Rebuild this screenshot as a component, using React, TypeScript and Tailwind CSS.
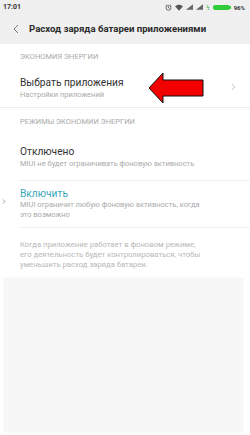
import React from "react"

const font = { fontFamily: "Roboto, 'Noto Sans', sans-serif" }

function StatusBar() {
  return (
    <div className="flex h-[14px] items-center justify-between bg-[#efefef] pl-[3px] pr-[5px]">
      <span className="text-[7px] font-bold text-[#333]">17:01</span>
      <div className="flex items-center gap-[3px] text-[#444]">
        {/* alarm */}
        <svg width="7" height="7" viewBox="0 0 10 10" fill="none" stroke="#555" strokeWidth="1.2">
          <circle cx="5" cy="5.5" r="3.5" />
          <path d="M5 3.5V5.6L6.3 6.4M1 2.2L2.4 1M9 2.2L7.6 1" />
        </svg>
        {/* wifi */}
        <svg width="8" height="7" viewBox="0 0 12 10" fill="#555">
          <path d="M6 10L0 3.2C3.5 0 8.5 0 12 3.2Z" />
        </svg>
        <svg width="7" height="6" viewBox="0 0 10 8" fill="#666">
          <path d="M10 0V8H0Z" />
        </svg>
        <svg width="7" height="6" viewBox="0 0 10 8" fill="#666">
          <path d="M10 0V8H0Z" />
        </svg>
        <span className="text-[6px] leading-none text-[#3caa3c]">ϟ</span>
        <div className="flex items-center">
          <div className="h-[5px] w-[17px] rounded-[2px] bg-[#2fcc3a]" />
          <div className="h-[3px] w-[1px] bg-[#2fcc3a]" />
        </div>
        <span className="text-[6px] font-bold text-[#333]">96%</span>
      </div>
    </div>
  )
}

function Chevron({ color, className }: { color: string; className?: string }) {
  return (
    <svg width="5" height="8" viewBox="0 0 5 8" fill="none" stroke={color} strokeWidth="1" className={className}>
      <path d="M0.8 0.8L4 4L0.8 7.2" />
    </svg>
  )
}

export default function App() {
  return (
    <div className="relative flex h-[435px] w-[250px] flex-col bg-white" style={font}>
      <StatusBar />
      <div className="flex h-[30px] items-center bg-[#f0f0f0] pl-[13px]">
        <svg width="6" height="10" viewBox="0 0 6 10" fill="none" stroke="#777" strokeWidth="1">
          <path d="M5 1L1 5L5 9" />
        </svg>
        <span className="ml-[10px] text-[9.6px] font-bold text-[#2a2a2a]">
          Расход заряда батареи приложениями
        </span>
      </div>

      <div className="flex h-[22px] items-end pb-[4px] pl-[20px] text-[7.5px] text-[#aaa]">
        ЭКОНОМИЯ ЭНЕРГИИ
      </div>
      <div className="flex h-[42px] items-center justify-between border-b border-[#ececec] pl-[20px] pr-[14px]">
        <div className="flex flex-col pt-[2px]">
          <span className="text-[10.2px] leading-[13px] text-[#333]">Выбрать приложения</span>
          <span className="text-[7.5px] leading-[11px] text-[#aaa]">Настройки приложений</span>
        </div>
        <Chevron color="#c8c8c8" />
      </div>

      <div className="flex h-[28px] items-center pl-[20px] text-[7.5px] text-[#aaa]">
        РЕЖИМЫ ЭКОНОМИИ ЭНЕРГИИ
      </div>
      <div className="ml-[20px] flex h-[45px] flex-col justify-center border-b border-[#f0f0f0] pb-[3px]">
        <span className="text-[10.2px] leading-[13px] text-[#333]">Отключено</span>
        <span className="text-[7.5px] leading-[11px] text-[#aaa]">
          MIUI не будет ограничивать фоновую активность
        </span>
      </div>
      <div className="relative ml-[20px] flex h-[47px] flex-col justify-center border-b border-[#f0f0f0] pb-[2px]">
        <span className="text-[10.2px] leading-[13px] text-[#3aa6b9]">Включить</span>
        <span className="text-[7.5px] leading-[10px] text-[#aaa]">
          MIUI ограничит любую фоновую активность, когда
          <br />
          это возможно
        </span>
        <Chevron color="#666" className="absolute left-[-18px] top-[18px] h-[5px] w-[4px]" />
      </div>

      <div className="flex h-[50px] items-start pl-[20px] pt-[12px] text-[7.7px] leading-[10px] text-[#b8b8b8]">
        Когда приложение работает в фоновом режиме,
        <br />
        его деятельность будет контролироваться, чтобы
        <br />
        уменьшить расход заряда батареи.
      </div>

      <div className="mx-[4px] mb-[3px] mr-[7px] flex-1 bg-[#f7f7f7] shadow-[0_0_2px_rgba(0,0,0,0.06)]" />

      {/* red arrow overlay */}
      <svg
        className="absolute left-[147px] top-[71px]"
        width="60"
        height="36"
        viewBox="0 0 60 36"
      >
        <path d="M2 17L16 2V9H56V25H16V32Z" fill="#f20000" stroke="#111" strokeWidth="1" strokeLinejoin="miter" />
      </svg>
    </div>
  )
}
